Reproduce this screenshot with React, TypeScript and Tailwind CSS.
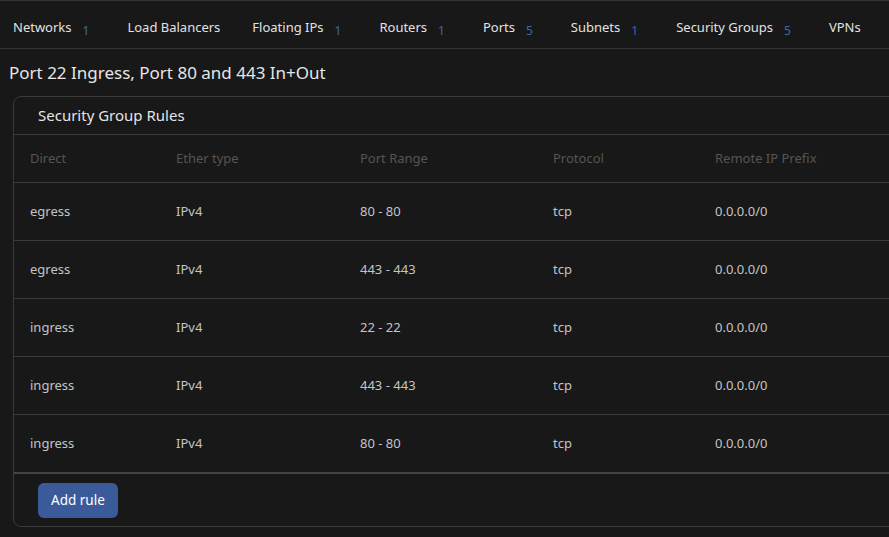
import React from "react";

const tabs: { label: string; count?: number }[] = [
  { label: "Networks", count: 1 },
  { label: "Load Balancers" },
  { label: "Floating IPs", count: 1 },
  { label: "Routers", count: 1 },
  { label: "Ports", count: 5 },
  { label: "Subnets", count: 1 },
  { label: "Security Groups", count: 5 },
  { label: "VPNs" },
];

const rows = [
  ["egress", "IPv4", "80 - 80", "tcp", "0.0.0.0/0"],
  ["egress", "IPv4", "443 - 443", "tcp", "0.0.0.0/0"],
  ["ingress", "IPv4", "22 - 22", "tcp", "0.0.0.0/0"],
  ["ingress", "IPv4", "443 - 443", "tcp", "0.0.0.0/0"],
  ["ingress", "IPv4", "80 - 80", "tcp", "0.0.0.0/0"],
];

const cols = ["w-[146px]", "w-[184px]", "w-[193px]", "w-[162px]", "w-[260px]"];
const heads = ["Direct", "Ether type", "Port Range", "Protocol", "Remote IP Prefix"];

export default function App() {
  return (
    <div
      className="w-[889px] h-[537px] overflow-hidden bg-[#181818] text-[#dcdcdc]"
      style={{ fontFamily: '"Noto Sans", "Open Sans", sans-serif' }}
    >
      <div className="border-t border-[#333] border-b h-[49px] flex items-center pt-[7px] pl-[13px] w-[1000px]">
        {tabs.map((t, i) => (
          <div key={i} className="flex items-baseline pr-[32px] text-[13px] text-[#e2e2e2]">
            <span>{t.label}</span>
            {t.count !== undefined && (
              <span className="ml-[11px] text-[12px] text-[#3f66ad] translate-y-[3px] pr-[6px]">
                {t.count}
              </span>
            )}
          </div>
        ))}
      </div>
      <div className="h-[47px] flex items-center pl-[9px] text-[17px] text-[#e6e6e6]">
        Port 22 Ingress, Port 80 and 443 In+Out
      </div>
      <div className="ml-[13px] w-[1000px] border border-[#3a3a3a] rounded-[8px]">
        <div className="h-[38px] flex items-center pl-[24px] text-[15px] text-[#e4e4e4] border-b border-[#3a3a3a]">
          Security Group Rules
        </div>
        <div className="flex h-[48px] items-center pt-[1px] border-b border-[#3a3a3a] pl-[16px] text-[13px] text-[#555555]">
          {heads.map((h, i) => (
            <div key={i} className={cols[i]}>
              {h}
            </div>
          ))}
        </div>
        {rows.map((r, ri) => (
          <div
            key={ri}
            className={`flex items-center pt-[1px] pl-[16px] text-[13px] text-[#c4c4c4] ${
              ri === rows.length - 1 ? "h-[59px] border-b-2 border-[#444]" : "h-[58px] border-b border-[#3a3a3a]"
            }`}
          >
            {r.map((c, ci) => (
              <div key={ci} className={cols[ci]}>
                {c}
              </div>
            ))}
          </div>
        ))}
        <div className="h-[52px] flex items-center pl-[24px]">
          <button className="h-[35px] px-[13px] rounded-[6px] bg-[#3b5a9a] text-white text-[13.5px]">
            Add rule
          </button>
        </div>
      </div>
    </div>
  );
}
